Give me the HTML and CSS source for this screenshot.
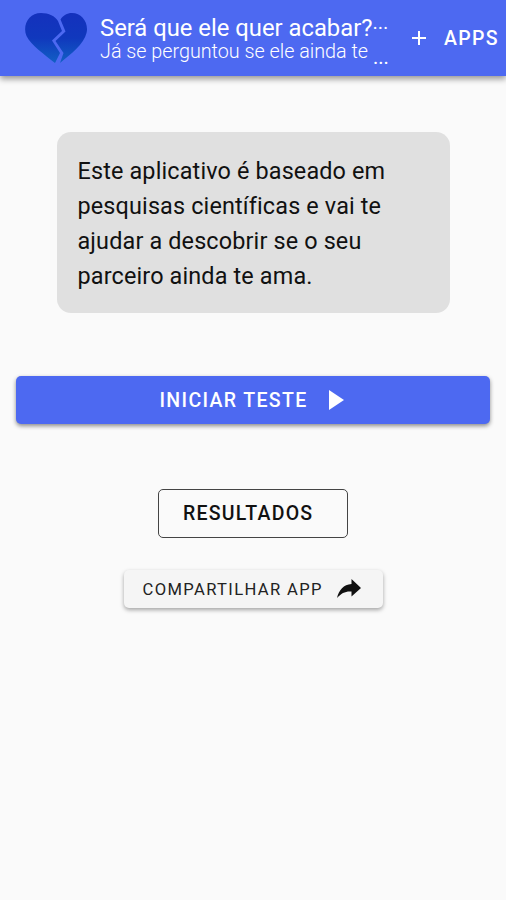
FILE: index.html
```html
<!DOCTYPE html>
<html lang="pt-BR">
<head>
<meta charset="utf-8">
<title>Será que ele quer acabar?</title>
<link rel="stylesheet" href="styles.css">
</head>
<body>
<header class="bar">
  <svg class="heart" viewBox="0 0 64 52">
    <defs>
      <linearGradient id="g" x1="0" y1="0" x2="0" y2="1">
        <stop offset="0" stop-color="#1431bd"/>
        <stop offset=".5" stop-color="#1038bd"/>
        <stop offset="1" stop-color="#1160c4"/>
      </linearGradient>
    </defs>
    <path fill="url(#g)" d="M31 51C21 43 7 33 2.500 24C-2 13 5 1 17 1C25 1 31 4 34 9L38 19L28 28.500L36 41L31 51Z"/>
    <path fill="url(#g)" d="M36.500 7.500C39 3.500 43 1 48 1C58 1 65 11 62.500 21C60 32 47 42 36 51L39.500 41L31.500 29L41.500 19.500Z"/>
  </svg>
  <div class="heading">
    <div class="line"><h1 class="title">Será que ele quer acabar?</h1><span class="dots">···</span></div>
    <div class="line"><p class="subtitle">Já se perguntou se ele ainda te</p><span class="dots dots-low">...</span></div>
  </div>
  <button class="apps">
    <svg class="plus" viewBox="0 0 16 16"><path d="M8 1v14M1 8h14" stroke="#fff" stroke-width="2"/></svg>
    <span>APPS</span>
  </button>
</header>
<main class="content">
  <p class="card">Este aplicativo é baseado em<br>pesquisas científicas e vai te<br>ajudar a descobrir se o seu<br>parceiro ainda te ama.</p>
  <button class="start"><span>INICIAR TESTE</span><svg class="play" viewBox="0 0 15 20"><path d="M0 0L15 10L0 20Z" fill="#fff"/></svg></button>
  <button class="results">RESULTADOS</button>
  <button class="share"><span>COMPARTILHAR APP</span><svg class="arrow" viewBox="0 0 24 20"><path d="M14.500 0L24 9L14.500 17.500V12.500C8.500 12 4.500 14 0 19C2 11 6.500 5.500 14.500 5Z" fill="#111"/></svg></button>
</main>
</body>
</html>
```
FILE: styles.css
```css
* { box-sizing: border-box; }
body {
  margin: 0;
  min-height: 900px;
  background: #fafafa;
  color: #111;
  font-family: Roboto, sans-serif;
  overflow: hidden;
}
button {
  border: 0;
  padding: 0;
  background: none;
  font-family: inherit;
  font-weight: 500;
  white-space: nowrap;
  display: flex;
  align-items: center;
}
.bar {
  height: 76px;
  display: flex;
  background: #4d69f1;
  color: #fff;
  box-shadow: 0 3px 6px rgba(0, 0, 0, .4);
}
.heart { width: 64px; height: 52px; margin: 12px 0 0 24px; flex: none; }
.heading { width: 311px; margin: 16px 0 0 12px; flex: none; }
.line { display: flex; height: 25px; align-items: flex-start; white-space: nowrap; }
.title { margin: 0; font-size: 23.800px; line-height: 25px; font-weight: 400; }
.subtitle { margin: 0; font-size: 19.750px; line-height: 21px; font-weight: 300; }
.dots { font-size: 20px; line-height: 25px; }
.dots-low { margin-left: 5px; line-height: 33px; }
.apps { height: 76px; color: #fff; font-size: 19.500px; letter-spacing: 1.300px; }
.plus { width: 16px; height: 16px; margin-right: 17px; }
.content { display: flex; flex-direction: column; align-items: center; }
.card {
  width: 393px;
  height: 181px;
  margin: 56px 0 0;
  padding: 22px 21px 18px;
  border-radius: 14px;
  background: #e0e0e0;
  font-size: 23.400px;
  line-height: 35px;
  letter-spacing: .15px;
  white-space: nowrap;
}
.start {
  width: 474px;
  height: 48px;
  margin-top: 63px;
  padding-right: 3px;
  justify-content: center;
  border-radius: 5px;
  background: #4d69f1;
  color: #fff;
  font-size: 19.500px;
  letter-spacing: 1.350px;
  box-shadow: 0 2px 4px rgba(0, 0, 0, .45);
}
.play { width: 15px; height: 20px; margin-left: 21px; }
.results {
  width: 190px;
  height: 49px;
  margin-top: 65px;
  padding-left: 24px;
  border: 1px solid #444;
  border-radius: 5px;
  color: #111;
  font-size: 19.500px;
  letter-spacing: 1.250px;
}
.share {
  width: 259px;
  height: 38px;
  margin-top: 32px;
  padding-left: 19px;
  border-radius: 5px;
  background: #f5f5f5;
  color: #222;
  font-size: 16.600px;
  font-weight: 400;
  letter-spacing: 1.350px;
  box-shadow: 0 2px 4px rgba(0, 0, 0, .35);
}
.arrow { width: 24px; height: 20px; margin-left: 14px; }
```
